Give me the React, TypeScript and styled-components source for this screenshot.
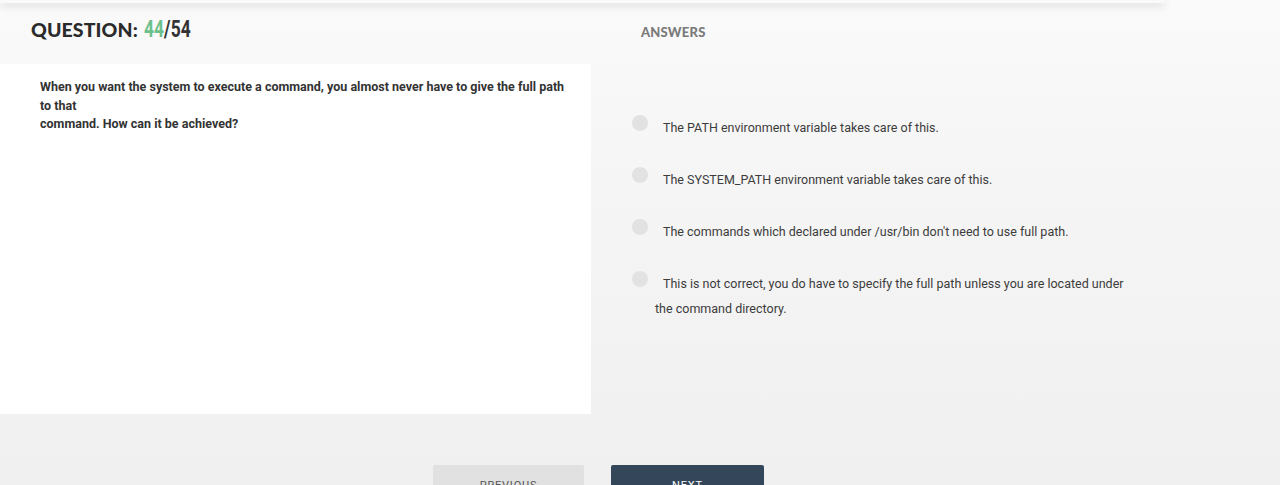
import React from "react";
import styled, { createGlobalStyle } from "styled-components";

const Global = createGlobalStyle`
  html, body { margin: 0; padding: 0; }
  body {
    background: #f0f0f0;
    font-family: Roboto, "Liberation Sans", sans-serif;
    overflow: hidden;
  }
`;

const Page = styled.div`
  width: 1280px;
  height: 485px;
  background: linear-gradient(180deg, #fafafa 0px, #f6f6f6 150px, #f2f2f2 350px, #f0f0f0 485px);
  overflow: hidden;
  display: flex;
  flex-direction: column;
`;

const TopBar = styled.div`
  width: 1165px;
  height: 3px;
  background: #fafafa;
  box-shadow: 0 2px 9px rgba(0, 0, 0, 0.22);
  border-radius: 0 0 6px 6px;
  flex-shrink: 0;
`;

const Body = styled.div`
  display: grid;
  grid-template-columns: 591px 1fr;
`;

const HeaderCell = styled.div<{ $pad: number; $lift?: number }>`
  height: 61px;
  display: flex;
  align-items: center;
  padding-left: ${(p) => p.$pad}px;
  padding-bottom: ${(p) => p.$lift ?? 0}px;
  box-sizing: border-box;
`;

const Title = styled.h1`
  margin: 0;
  font-family: Lato, "Open Sans", sans-serif;
  font-weight: 900;
  font-size: 19.5px;
  letter-spacing: 0.1px;
  color: #2b2b2b;
  display: flex;
  align-items: baseline;
  padding-bottom: 9px;
`;

const Count = styled.span`
  display: inline-block;
  font-family: Roboto, "Liberation Sans", sans-serif;
  font-weight: 700;
  font-size: 23.5px;
  margin-left: 6px;
  color: #333;
  transform: scaleX(0.74);
  transform-origin: left center;
`;

const Current = styled.span`
  color: #6cc08b;
`;

const SectionLabel = styled.h2`
  margin: 0;
  font-family: Lato, "Open Sans", sans-serif;
  font-weight: 900;
  font-size: 13px;
  color: #7a7a7a;
  letter-spacing: 0.2px;
`;

const QuestionPanel = styled.div`
  background: #ffffff;
  height: 350px;
  padding: 14px 0 0 40px;
  box-sizing: border-box;
`;

const QuestionText = styled.p`
  margin: 0;
  width: 536px;
  font-family: Roboto, "Liberation Sans", sans-serif;
  font-weight: 700;
  font-size: 12.5px;
  line-height: 18.5px;
  color: #333;
`;

const AnswerList = styled.div`
  padding: 51px 0 0 655px;
  margin-left: -591px;
  display: flex;
  flex-direction: column;
  gap: 12px;
  width: 1125px;
  box-sizing: border-box;
`;

const Answer = styled.label`
  display: block;
  font-family: Roboto, "Liberation Sans", sans-serif;
  font-size: 12.5px;
  line-height: 25px;
  color: #3c3c3c;
  min-height: 40px;
  cursor: pointer;
`;

const Radio = styled.span`
  display: inline-block;
  width: 16px;
  height: 16px;
  border-radius: 50%;
  background: #e2e2e2;
  margin-left: -23px;
  margin-right: 15px;
  vertical-align: 1px;
`;

const Footer = styled.div`
  display: flex;
  gap: 27px;
  padding: 51px 0 0 433px;
`;

const Button = styled.button<{ $primary?: boolean }>`
  width: ${(p) => (p.$primary ? 153 : 151)}px;
  height: 44px;
  border: none;
  border-radius: 2px 2px 0 0;
  background: ${(p) => (p.$primary ? "#34465a" : "#e1e1e1")};
  color: ${(p) => (p.$primary ? "#ffffff" : "#555")};
  font-family: Roboto, "Liberation Sans", sans-serif;
  font-size: 11px;
  letter-spacing: 0.8px;
  text-transform: uppercase;
  padding: 14px 0 0;
  display: flex;
  justify-content: center;
  align-items: flex-start;
`;

const answers = [
  "The PATH environment variable takes care of this.",
  "The SYSTEM_PATH environment variable takes care of this.",
  "The commands which declared under /usr/bin don't need to use full path.",
  "This is not correct, you do have to specify the full path unless you are located under the command directory.",
];

export default function App() {
  return (
    <Page>
      <Global />
      <TopBar />
      <Body>
        <HeaderCell $pad={31}>
          <Title>
            QUESTION:
            <Count>
              <Current>44</Current>/54
            </Count>
          </Title>
        </HeaderCell>
        <HeaderCell $pad={50} $lift={4}>
          <SectionLabel>ANSWERS</SectionLabel>
        </HeaderCell>
        <QuestionPanel>
          <QuestionText>
            When you want the system to execute a command, you almost never have to give the full path to that
            <br />
            command. How can it be achieved?
          </QuestionText>
        </QuestionPanel>
        <AnswerList>
          {answers.map((a) => (
            <Answer key={a}>
              <Radio />
              {a}
            </Answer>
          ))}
        </AnswerList>
      </Body>
      <Footer>
        <Button>Previous</Button>
        <Button $primary>Next</Button>
      </Footer>
    </Page>
  );
}
